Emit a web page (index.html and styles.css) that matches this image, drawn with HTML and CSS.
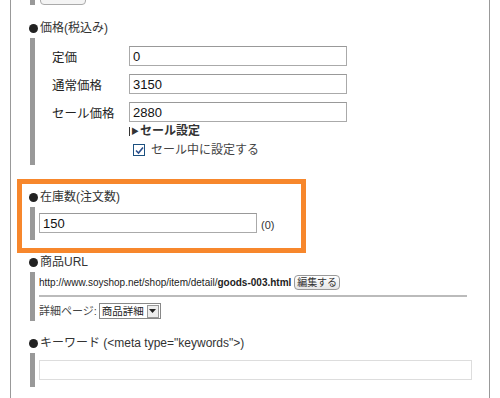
FILE: index.html
```html
<!DOCTYPE html>
<html lang="ja">
<head>
  <meta charset="UTF-8">
  <title>商品編集</title>
  <link rel="stylesheet" href="styles.css">
</head>
<body>

  <div class="page">

    <div class="top-bar">
      <span class="top-button"></span>
    </div>

    <div class="sec">
      <div class="sec-title"><span class="dot"></span>価格(税込み)</div>
      <div class="sec-body price-body">
        <div class="price-row">
          <span class="price-label">定価</span>
          <input class="text-input" type="text" value="0">
        </div>
        <div class="price-row">
          <span class="price-label">通常価格</span>
          <input class="text-input" type="text" value="3150">
        </div>
        <div class="price-row">
          <span class="price-label">セール価格</span>
          <input class="text-input" type="text" value="2880">
        </div>
        <div class="sale-link"><span class="arrow">▶</span>セール設定</div>
        <div class="sale-check">
          <span class="check-box">
            <svg width="9" height="9" viewBox="0 0 9 9"><path d="M1 4.5 L3.5 7 L8 1.5" fill="none" stroke="#2b4f8c" stroke-width="1.6"/></svg>
          </span>
          セール中に設定する
        </div>
      </div>
    </div>

    <div class="sec stock">
      <div class="sec-title"><span class="dot"></span>在庫数(注文数)</div>
      <div class="sec-body stock-body">
        <input class="text-input" type="text" value="150">
        <span class="order-count">(0)</span>
      </div>
    </div>

    <div class="sec url-sec">
      <div class="sec-title"><span class="dot"></span>商品URL</div>
      <div class="sec-body url-body">
        <div class="url-line">http://www.soyshop.net/shop/item/detail/<b>goods-003.html</b> <span class="edit-btn">編集する</span></div>
        <div class="url-rule"></div>
        <div class="detail-line">
          詳細ページ:
          <span class="fake-select">商品詳細<span class="select-arrow">
            <svg width="7" height="4" viewBox="0 0 7 4"><path d="M0 0 L7 0 L3.5 4 Z" fill="#222"/></svg>
          </span></span>
        </div>
      </div>
    </div>

    <div class="sec kw-sec">
      <div class="sec-title"><span class="dot"></span>キーワード (&lt;meta type="keywords"&gt;)</div>
      <div class="sec-body kw-body">
        <input class="text-input kw-input" type="text" value="">
      </div>
    </div>

  </div>

</body>
</html>
```

FILE: styles.css
```css
body {
  margin: 0;
  font-family: "Liberation Sans", "Noto Sans CJK JP", sans-serif;
  font-size: 12px;
  color: #222;
  background-color: #fff;
}
.page {
  margin-left: 10px;
  width: 480px;
  height: 398px;
  border-left: 1px solid #999;
  border-right: 1px solid #999;
  padding-left: 6px;
  box-sizing: border-box;
  overflow: hidden;
}
.top-bar {
  height: 5px;
  margin-left: 13px;
  border-left: 5px solid #999;
  display: flex;
  align-items: flex-end;
}
.top-button {
  display: block;
  flex-shrink: 0;
  width: 44px;
  height: 20px;
  margin-left: 5px;
  border: 1px solid #aaa;
  border-radius: 4px;
  background-color: #f4f4f4;
}
.sec {
  padding-left: 12px;
}
.sec-title {
  height: 16px;
  line-height: 16px;
  display: flex;
  align-items: center;
  color: #333;
}
.dot {
  display: inline-block;
  width: 9px;
  height: 9px;
  border-radius: 50%;
  background-color: #222;
  margin-right: 2px;
}
.sec-body {
  margin-top: 2px;
  margin-left: 1px;
  border-left: 5px solid #999;
}
.text-input {
  box-sizing: border-box;
  width: 218px;
  height: 20px;
  margin: 0;
  padding: 0 3px;
  border: 1px solid #aaa;
  border-top-color: #999;
  font-family: "Liberation Sans", sans-serif;
  font-size: 13px;
  color: #111;
  background-color: #fff;
}

/* 価格 */
.sec:nth-child(2) {
  margin-top: 15px;
}
.price-body {
  padding: 8px 0 7px 0;
}
.price-row {
  display: flex;
  align-items: center;
  margin-bottom: 8px;
}
.price-row:nth-child(3) {
  margin-bottom: 1px;
}
.price-label {
  width: 77px;
  padding-left: 17px;
  font-size: 12.5px;
  color: #222;
}
.sale-link {
  margin-left: 94px;
  height: 16px;
  line-height: 16px;
  font-weight: bold;
  color: #333;
}
.arrow {
  font-size: 8px;
  vertical-align: 1px;
  margin-right: 1px;
  border-left: 1px solid #333;
  padding-left: 1px;
}
.sale-check {
  margin-top: 3px;
  margin-left: 98px;
  height: 16px;
  line-height: 16px;
  display: flex;
  align-items: center;
  color: #444;
}
.check-box {
  box-sizing: border-box;
  width: 12px;
  height: 12px;
  border: 1px solid #1c5180;
  background-color: #fff;
  margin-right: 6px;
  display: flex;
  align-items: center;
  justify-content: center;
}

/* 在庫数 */
.stock {
  margin-top: 14px;
  width: 289px;
  box-sizing: border-box;
  border: 5px solid #f7872c;
  padding: 5px 0 8px 7px;
}
.stock-body {
  padding: 6px 0 7px 4px;
  display: flex;
  align-items: center;
}
.order-count {
  margin-left: 4px;
  font-size: 11px;
  color: #333;
  margin-top: 3px;
}

/* 商品URL */
.url-sec {
  margin-top: 1px;
}
.url-body {
  padding: 3px 0 2px 4px;
}
.url-line {
  height: 16px;
  line-height: 16px;
  font-size: 10px;
  color: #222;
  white-space: nowrap;
}
.edit-btn {
  display: inline-block;
  height: 13px;
  line-height: 13px;
  padding: 0 2px;
  border: 1px solid #999;
  border-radius: 4px;
  background: linear-gradient(#fff, #e6e6e6);
  font-size: 10px;
  color: #333;
}
.url-rule {
  margin-top: 4px;
  width: 428px;
  height: 2px;
  background-color: #bbb;
}
.detail-line {
  margin-top: 6px;
  height: 16px;
  line-height: 16px;
  display: flex;
  align-items: center;
  font-size: 11px;
  color: #444;
}
.fake-select {
  margin-left: 2px;
  height: 14px;
  line-height: 14px;
  border: 1px solid #888;
  padding-left: 2px;
  display: flex;
  align-items: center;
  font-size: 10.5px;
  color: #222;
}
.select-arrow {
  margin-left: 3px;
  width: 10px;
  height: 11px;
  border: 1px solid #999;
  background-color: #eee;
  display: flex;
  align-items: center;
  justify-content: center;
  margin-right: 1px;
}

/* キーワード */
.kw-sec {
  margin-top: 14px;
}
.kw-body {
  padding: 7px 0 7px 4px;
}
.kw-input {
  width: 433px;
  border-color: #ddd;
}
```
